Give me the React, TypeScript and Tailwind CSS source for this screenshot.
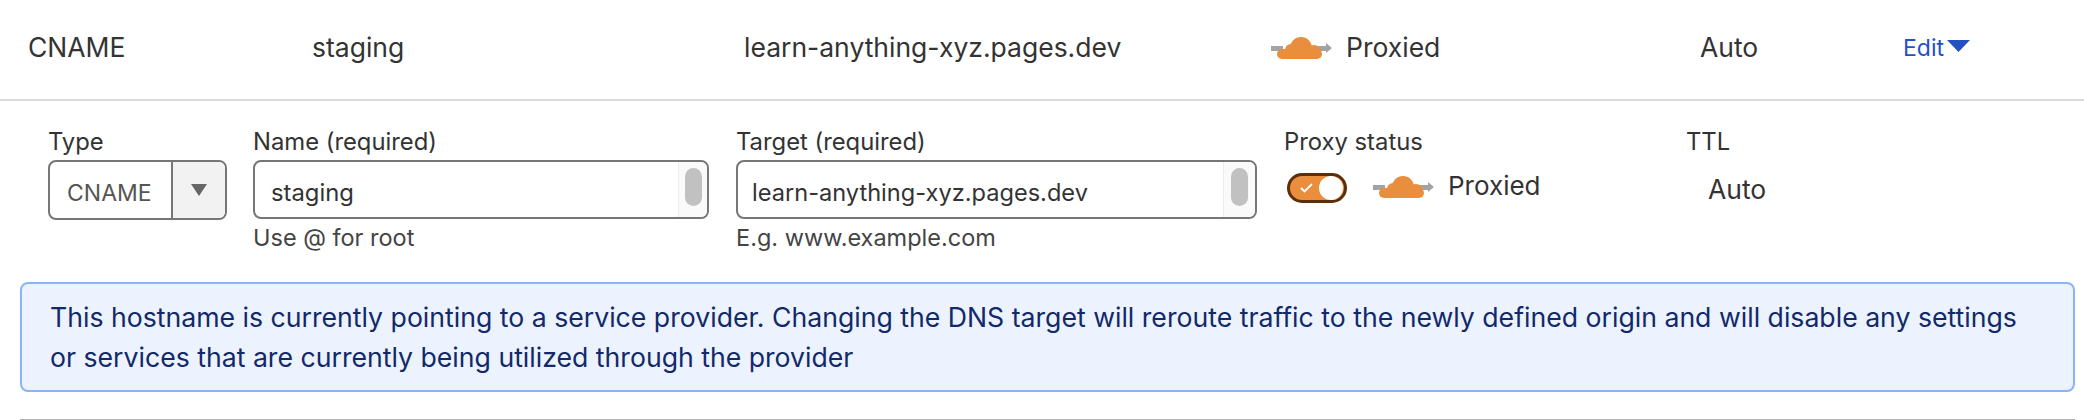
const font = "font-['Inter','Liberation_Sans',sans-serif]";

function ProxyCloud() {
  return (
    <svg width="61" height="22" viewBox="0 0 61 22" className="shrink-0">
      <path d="M0 9h12v5H0z" fill="#a3a3a3" />
      <path d="M46 9h9V6l6 5-6 5v-2h-9z" fill="#a3a3a3" />
      <g fill="#e98e3c">
        <circle cx="30" cy="11" r="11" />
        <circle cx="43" cy="15" r="7" />
        <circle cx="20" cy="13" r="6" />
        <circle cx="11" cy="17" r="5" />
        <circle cx="46" cy="17" r="5" />
        <path d="M11 12h35v10H11z" />
      </g>
    </svg>
  );
}

function FieldScrollbar({ narrow }: { narrow?: boolean }) {
  return (
    <div className={`${narrow ? "w-[29px]" : "w-[32px]"} self-stretch border-l border-[#ececec] bg-[#fafafa] flex justify-center pt-[6px]`}>
      <div className="w-[17px] h-[38px] rounded-full bg-[#c1c1c1]" />
    </div>
  );
}

export default function App() {
  return (
    <div className={`${font} w-[2084px] h-[420px] bg-white text-[#333333] overflow-hidden`}>
      {/* Record row */}
      <div className="h-[101px] border-b-2 border-[#d9d9d9] flex items-center text-[26.5px] pb-[3px]">
        <div className="w-[312px] pl-[28px]">CNAME</div>
        <div className="w-[432px]">staging</div>
        <div className="w-[527px]">learn-anything-xyz.pages.dev</div>
        <div className="w-[429px] flex items-center gap-[14px]">
          <ProxyCloud />
          <span>Proxied</span>
        </div>
        <div className="w-[203px]">Auto</div>
        <div className="flex items-center gap-[3px] text-[#2351c4] text-[23px]">
          Edit
          <svg width="23" height="12" viewBox="0 0 23 12" className="-mt-[4px]">
            <path d="M0 0h23L11.500 12z" fill="#2351c4" />
          </svg>
        </div>
      </div>

      {/* Edit form */}
      <div className="h-[181px] flex pl-[48px] pt-[26px] text-[23.8px] leading-[30px]">
        <div className="w-[205px]">
          <div className="mb-[3px]">Type</div>
          <div className="w-[179px] h-[60px] border-2 border-[#767676] rounded-[8px] flex overflow-hidden">
            <div className="w-[123px] border-r-2 border-[#767676] flex items-center pl-[17px] pt-[5px] text-[#555555] text-[23px]">CNAME</div>
            <div className="flex-1 bg-[#f2f2f2] flex items-center justify-center">
              <svg width="16" height="12" viewBox="0 0 16 12">
                <path d="M0 0h16L8 12z" fill="#666666" />
              </svg>
            </div>
          </div>
        </div>
        <div className="w-[483px]">
          <div className="mb-[3px]">Name (required)</div>
          <div className="w-[456px] h-[59px] border-2 border-[#767676] rounded-[8px] flex items-center overflow-hidden">
            <div className="flex-1 pl-[16px] pt-[6px]">staging</div>
            <FieldScrollbar narrow />
          </div>
          <div className="mt-[4px] text-[#444444] text-[23.5px]">Use @ for root</div>
        </div>
        <div className="w-[549px]">
          <div className="mb-[3px]">Target (required)</div>
          <div className="w-[521px] h-[59px] border-2 border-[#767676] rounded-[8px] flex items-center overflow-hidden">
            <div className="flex-1 pl-[14px] pt-[6px] text-[23.6px]">learn-anything-xyz.pages.dev</div>
            <FieldScrollbar />
          </div>
          <div className="mt-[4px] text-[#444444] text-[23.5px]">E.g. www.example.com</div>
        </div>
        <div className="w-[402px]">
          <div className="mb-[8px] -ml-[1px]">Proxy status</div>
          <div className="flex items-center h-[40px]">
            <div className="w-[60px] h-[30px] mt-[6px] ml-[2px] rounded-full bg-[#e98e3c] border-[3px] border-[#5c2e0a] flex items-center justify-between pl-[10px] pr-[1px]">
              <svg width="13" height="10" viewBox="0 0 13 10">
                <path d="M1 5l3.500 3.500L12 1" fill="none" stroke="#ffffff" strokeWidth="1.800" />
              </svg>
              <div className="w-[24px] h-[24px] rounded-full bg-white" />
            </div>
            <div className="ml-[26px] mt-[3px]">
              <ProxyCloud />
            </div>
            <span className="ml-[14px] pt-[2px] text-[26px]">Proxied</span>
          </div>
        </div>
        <div>
          <div className="mb-[8px] -ml-[1px]">TTL</div>
          <div className="h-[40px] flex items-center pl-[21px] pt-[8px] text-[26.5px]">Auto</div>
        </div>
      </div>

      {/* Notice */}
      <div className="ml-[20px] w-[2055px] h-[110px] border-2 border-[#8ab4f8] rounded-[8px] bg-[#ecf3fe] pl-[28px] pt-[13px] text-[#12296a] text-[26.65px] leading-[40px]">
        This hostname is currently pointing to a service provider. Changing the DNS target will reroute traffic to the newly defined origin and will disable any settings
        <br />
        or services that are currently being utilized through the provider
      </div>

      <div className="ml-[20px] w-[2055px] mt-[27px] h-[2px] bg-[#b3b3b3]" />
    </div>
  );
}
